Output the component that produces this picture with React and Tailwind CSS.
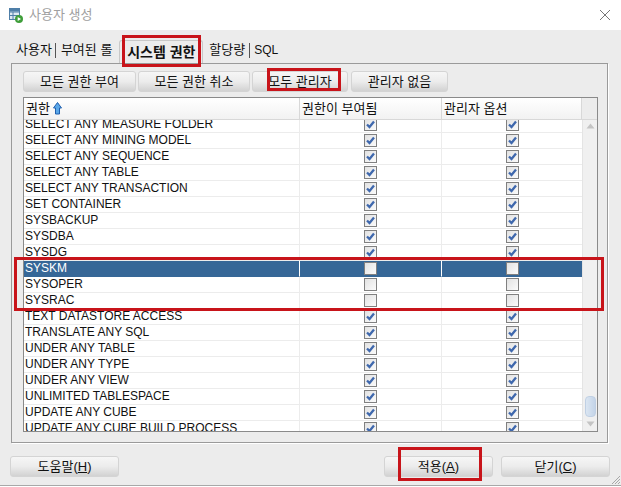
const KR = "font-['Liberation_Sans','Noto_Sans_CJK_KR',sans-serif]";

// rows of the privilege table: name, granted flag, selected flag
const rows = [
  ['SELECT ANY MEASURE FOLDER', true],
  ['SELECT ANY MINING MODEL', true],
  ['SELECT ANY SEQUENCE', true],
  ['SELECT ANY TABLE', true],
  ['SELECT ANY TRANSACTION', true],
  ['SET CONTAINER', true],
  ['SYSBACKUP', true],
  ['SYSDBA', true],
  ['SYSDG', true],
  ['SYSKM', false, true],
  ['SYSOPER', false],
  ['SYSRAC', false],
  ['TEXT DATASTORE ACCESS', true],
  ['TRANSLATE ANY SQL', true],
  ['UNDER ANY TABLE', true],
  ['UNDER ANY TYPE', true],
  ['UNDER ANY VIEW', true],
  ['UNLIMITED TABLESPACE', true],
  ['UPDATE ANY CUBE', true],
  ['UPDATE ANY CUBE BUILD PROCESS', true],
];

const Check = ({ on }) => (
  <span className="flex h-[13px] w-[13px] items-center justify-center border border-[#808080] bg-gradient-to-br from-[#e2e2e2] to-[#fbfbfb]">
    {on && (
      <svg width="11" height="11" viewBox="0 0 11 11">
        <path d="M2 5.5 L4.5 8 L9 2.5" fill="none" stroke="#3f68ad" strokeWidth="2.3" />
      </svg>
    )}
  </span>
);

const Btn = ({ className = '', children }) => (
  <div className={`flex h-[21px] items-center justify-center rounded-[3px] border border-[#d4d4d4] bg-gradient-to-b from-[#f6f6f6] via-[#ececec] to-[#d2d2d2] text-[13px] text-[#111] ${className}`}>
    {children}
  </div>
);

const Row = ({ name, on, selected }) => (
  <div className={`flex h-[16px] shrink-0 text-[12px] leading-[15px] ${selected ? 'bg-[#366797] text-white' : 'bg-white text-[#111]'}`}>
    <div className={`w-[276px] border-b border-r pl-px ${selected ? 'border-[#366797] border-r-white' : 'border-[#ececec]'}`}>{name}</div>
    <div className={`flex w-[142px] justify-center border-b border-r pt-[1px] ${selected ? 'border-[#366797] border-r-white' : 'border-[#ececec]'}`}>
      <Check on={on} />
    </div>
    <div className={`flex w-[140px] justify-center border-b pt-[1px] ${selected ? 'border-[#366797]' : 'border-[#ececec]'}`}>
      <Check on={on} />
    </div>
  </div>
);

const Head = ({ className = '', children }) => (
  <div className={`flex h-[21px] items-center border-r border-[#d8d8d8] pl-[2px] text-[13px] text-[#111] ${className}`}>{children}</div>
);

const RedBox = ({ className }) => (
  <div className={`absolute border-[3px] border-[#c8141a] ${className}`} />
);

export default function App() {
  return (
    <div className={`relative flex h-[487px] w-[621px] flex-col overflow-hidden bg-white ${KR}`}>
      {/* title bar */}
      <div className="flex h-[30px] shrink-0 items-center bg-white pl-[9px] pr-[10px]">
        <svg width="14" height="15" viewBox="0 0 14 15">
          <rect x="0.5" y="0.5" width="10" height="11" fill="#dfe9f3" stroke="#4f7fa8" />
          <path d="M0.5 4H10.5M0.5 7.5H10.5M4 4V11.5" stroke="#4f7fa8" fill="none" />
          <rect x="0.5" y="0.5" width="10" height="3" fill="#4f7fa8" />
          <circle cx="10" cy="11" r="4" fill="#3f9e3a" />
          <path d="M8.7 9V13L12 11Z" fill="#fff" />
        </svg>
        <span className="ml-[6px] text-[13px] text-[#a0a0a0]">사용자 생성</span>
        <svg className="ml-auto" width="12" height="12" viewBox="0 0 12 12">
          <path d="M1 1L11 11M11 1L1 11" stroke="#777" strokeWidth="1" fill="none" />
        </svg>
      </div>

      {/* dialog body */}
      <div className="box-content flex h-[455px] shrink-0 flex-col border-b border-[#a8a8a8] bg-[#ececec]">
        {/* tabs */}
        <div className="flex h-[33px] shrink-0 items-end pl-[16px] text-[13px] text-[#111]">
          <span className="pb-[5px] leading-[16px]">사용자</span>
          <span className="ml-[3px] mr-[5px] mb-[5px] h-[15px] w-px bg-[#555]" />
          <span className="pb-[5px] leading-[16px]">부여된 롤</span>
          <div className="ml-[7px] flex h-[23px] w-[84px] items-center justify-center rounded-t-[3px] border border-b-0 border-[#c8c8c8] bg-[#ececec] text-[14px] font-bold">시스템 권한</div>
          <span className="ml-[6px] pb-[5px] leading-[16px]">할당량</span>
          <span className="ml-[4px] mr-[4px] mb-[5px] h-[15px] w-px bg-[#555]" />
          <span className="pb-[5px] text-[12px] leading-[16px]">SQL</span>
        </div>

        {/* panel */}
        <div className="ml-[11px] flex h-[380px] w-[597px] shrink-0 flex-col border border-[#9a9a9a] px-[11px] pt-[7px] shadow-[1px_1px_0_#fff]">
          <div className="flex gap-[2px]">
            <Btn className="w-[113px]">모든 권한 부여</Btn>
            <Btn className="w-[112px]">모든 권한 취소</Btn>
            <Btn className="w-[96px]">모두 관리자</Btn>
            <Btn className="ml-px w-[97px]">관리자 없음</Btn>
          </div>

          {/* table */}
          <div className="mt-[5px] flex h-[335px] w-[575px] flex-col border border-[#8a8a8a] bg-white">
            <div className="flex h-[22px] shrink-0 border-b border-[#d8d8d8] bg-gradient-to-b from-white to-[#f2f2f2]">
              <Head className="w-[276px]">
                권한
                <svg className="ml-[3px]" width="9" height="13" viewBox="0 0 9 13">
                  <path d="M4.5 0.5L8.5 6H6.5V12H2.5V6H0.5Z" fill="#5aa7e8" stroke="#1f5fae" />
                </svg>
              </Head>
              <Head className="w-[142px]">권한이 부여됨</Head>
              <Head className="w-[140px]">관리자 옵션</Head>
              <div className="flex-1 bg-[#ececec]" />
            </div>
            <div className="flex min-h-0 flex-1">
              <div className="w-[558px] overflow-hidden">
                <div className="mt-[-3px] flex flex-col">
                  {rows.map(([name, on, selected]) => (
                    <Row key={name} name={name} on={on} selected={selected} />
                  ))}
                </div>
              </div>
              {/* scrollbar */}
              <div className="flex flex-1 flex-col items-center border-l border-[#e4e4e4] bg-[#f0f0f0] py-[3px]">
                <svg width="9" height="6" viewBox="0 0 9 6"><path d="M4.5 0.5L8.5 5.5H0.5Z" fill="#c4c4c4" /></svg>
                <div className="mt-auto h-[21px] w-[11px] rounded-[4px] border border-[#c0d0e4] bg-gradient-to-r from-[#dbe6f2] to-[#c4d4e8]" />
                <svg className="mb-[1px] mt-[4px]" width="9" height="6" viewBox="0 0 9 6"><path d="M4.5 5.5L8.5 0.5H0.5Z" fill="#c4c4c4" /></svg>
              </div>
            </div>
          </div>
        </div>

        {/* bottom buttons */}
        <div className="mt-[13px] flex px-[10px]">
          <Btn className="w-[109px]"><span>도움말(<span className="underline">H</span>)</span></Btn>
          <Btn className="ml-auto w-[109px]"><span>적용(<span className="underline">A</span>)</span></Btn>
          <Btn className="ml-[8px] mr-[1px] w-[109px]"><span>닫기(<span className="underline">C</span>)</span></Btn>
        </div>
      </div>

      {/* resize grip */}
      <svg className="absolute bottom-[2px] right-0" width="12" height="12" viewBox="0 0 12 12">
        <path d="M11 3L3 11M11 6L6 11M11 9L9 11" stroke="#a8a8a8" fill="none" />
      </svg>

      {/* red annotation boxes */}
      <RedBox className="left-[122px] top-[35px] h-[32px] w-[79px]" />
      <RedBox className="left-[267px] top-[68px] h-[23px] w-[74px]" />
      <RedBox className="left-[14px] top-[257px] h-[54px] w-[590px]" />
      <RedBox className="left-[398px] top-[447px] h-[34px] w-[84px]" />
    </div>
  );
}
